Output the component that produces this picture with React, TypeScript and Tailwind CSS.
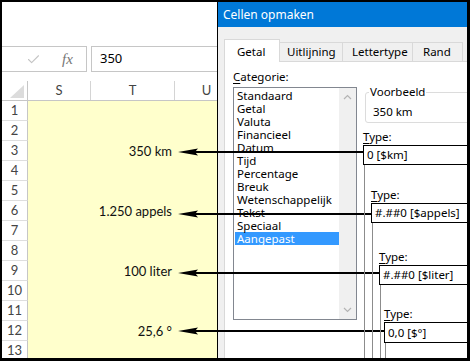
import React from "react"
import { Check } from "lucide-react"

const categories = [
    "Standaard",
    "Getal",
    "Valuta",
    "Financieel",
    "Datum",
    "Tijd",
    "Percentage",
    "Breuk",
    "Wetenschappelijk",
    "Tekst",
    "Speciaal",
    "Aangepast",
]

const cellTexts: Record<number, string> = {
    3: "350 km",
    6: "1.250 appels",
    9: "100 liter",
    12: "25,6 °",
}

const rows = Array.from({ length: 13 }, (_, i) => i + 1)

// arrow rows (y) and where each line meets its Type box (x), in overlay coords
const arrows = [
    { y: 150, x: 361 },
    { y: 212, x: 369 },
    { y: 271, x: 377 },
    { y: 329, x: 382 },
]

const ExcelPane: React.FC = () => {
    return (
        <div className="w-[215px] shrink-0 flex flex-col overflow-hidden bg-white font-['Lato',sans-serif]">
            <div className="h-[44px] shrink-0" />

            <div className="h-[26px] shrink-0 flex">
                <div className="w-[85px] shrink-0 flex items-center border-y border-r border-[#c6c6c6]">
                    <Check size={15} strokeWidth={1.7} className="ml-[24px] text-[#c4c4c4]" />
                    <span className="ml-[21px] font-['Liberation_Serif',serif] italic text-[15px] text-[#767676]">fx</span>
                </div>
                <div className="ml-[4px] w-[200px] shrink-0 flex items-center pl-[8px] border-y border-l border-[#c6c6c6] font-['Noto_Sans',sans-serif] text-[13px] text-black">
                    350
                </div>
            </div>

            <div className="h-[9px] shrink-0" />

            <div className="h-[20px] shrink-0 flex border-b border-[#c6c6c6] text-[13px] text-[#444]">
                <div className="w-[26px] shrink-0 border-r border-[#c6c6c6]">
                    <svg width="25" height="19" viewBox="0 0 25 19">
                        <polygon points="22,4 22,17 8,17" fill="#dcdcdc" />
                    </svg>
                </div>
                <div className="w-[63px] shrink-0 flex items-center justify-center border-r border-[#d4d4d4]">S</div>
                <div className="w-[84px] shrink-0 flex items-center justify-center border-r border-[#d4d4d4]">T</div>
                <div className="w-[63px] shrink-0 flex items-center justify-center">U</div>
            </div>

            {rows.map((r) => (
                <div key={r} className="h-[20px] shrink-0 flex">
                    <div className="w-[26px] shrink-0 flex items-center justify-center border-r border-b border-r-[#c6c6c6] border-b-[#dedede] text-[13px] text-[#444]">
                        {r}
                    </div>
                    <div className="flex-1 bg-[#ffffcc]">
                        <div className="w-[147px] pr-[3px] text-right text-[13px] leading-[20px] text-[#111]">{cellTexts[r] ?? ""}</div>
                    </div>
                </div>
            ))}
        </div>
    )
}

const Chevron: React.FC<{ up?: boolean }> = ({ up }) => (
    <svg width="9" height="6" viewBox="0 0 9 6">
        <polyline
            points={up ? "1,5 4.5,1.5 8,5" : "1,1 4.5,4.5 8,1"}
            fill="none"
            stroke="#b4b4b4"
            strokeWidth="1.2"
        />
    </svg>
)

const FormatDialog: React.FC = () => {
    return (
        <div className="flex-1 flex flex-col overflow-hidden border-l border-black font-['Noto_Sans',sans-serif] text-[11.5px] text-black">
            <div className="h-[25px] shrink-0 flex items-center pl-[5px] bg-[#0078d7] text-white text-[12px]">Cellen opmaken</div>

            <div className="flex-1 flex flex-col bg-[#f0f0f0] pl-[6px] pt-[12px]">
                <div className="h-[22px] shrink-0 flex items-end leading-[16px]">
                    <div className="relative z-10 w-[56px] h-[23px] -mb-[1px] shrink-0 bg-white border-x border-t border-[#d9d9d9] pl-[12px] pt-[4px]">
                        Getal
                    </div>
                    <div className="w-[63px] h-[19px] shrink-0 border-t border-r border-[#d9d9d9] pl-[7px] pt-[1px]">Uitlijning</div>
                    <div className="w-[70px] h-[19px] shrink-0 border-t border-r border-[#d9d9d9] pl-[9px] pt-[1px]">Lettertype</div>
                    <div className="w-[50px] h-[19px] shrink-0 border-t border-r border-[#d9d9d9] pl-[10px] pt-[1px]">Rand</div>
                </div>

                <div className="flex-1 flex overflow-hidden bg-white border-t border-l border-[#d9d9d9] pl-[8px] pt-[7px]">
                    <div className="w-[124px] shrink-0 flex flex-col">
                        <div className="h-[18px] leading-[16px]">
                            <span className="underline underline-offset-2">C</span>ategorie:
                        </div>
                        <div className="h-[233px] flex border border-[#828790]">
                            <div className="flex-1 pl-[1px] pt-[1px]">
                                {categories.map((c) => (
                                    <div
                                        key={c}
                                        className={
                                            c === "Aangepast"
                                                ? "h-[13px] leading-[13px] pl-[2px] bg-[#3399ff] text-white"
                                                : "h-[13px] leading-[13px] pl-[2px]"
                                        }
                                    >
                                        {c}
                                    </div>
                                ))}
                            </div>
                            <div className="w-[17px] flex flex-col items-center justify-between bg-[#f0f0f0] py-[6px]">
                                <Chevron up />
                                <Chevron />
                            </div>
                        </div>
                    </div>

                    <div className="ml-[8px] pt-[23px]">
                        <div className="relative w-[120px] h-[31px] rounded-[3px] border border-[#dcdcdc] pl-[7px] pt-[11px] leading-[16px]">
                            <span className="absolute left-[3px] -top-[9px] bg-white px-[1px] leading-[16px]">Voorbeeld</span>
                            350 km
                        </div>
                    </div>
                </div>
            </div>
        </div>
    )
}

const TypeCallout: React.FC<{ pos: string; value: string; boxH: string }> = ({ pos, value, boxH }) => (
    <div className={`absolute ${pos} w-[130px] font-['Noto_Sans',sans-serif] text-[11.5px] text-black`}>
        <div className="h-[15px] leading-[14px]">
            <span className="underline underline-offset-2">T</span>ype:
        </div>
        <div className={`${boxH} bg-white border-[1.5px] border-black pl-[3px] flex items-center`}>{value}</div>
        <div className="ml-[1px] w-px h-[220px] bg-[#8c8c8c]" />
    </div>
)

const Annotations: React.FC = () => (
    <>
        <svg className="absolute inset-0 pointer-events-none" width="465" height="356" viewBox="0 0 465 356">
            {arrows.map((a) => (
                <g key={a.y}>
                    <rect x="192" y={a.y - 1} width={a.x - 192} height="2" fill="#000" />
                    <polygon points={`176,${a.y} 196,${a.y - 3.5} 193,${a.y} 196,${a.y + 3.5}`} fill="#000" />
                </g>
            ))}
        </svg>
        <TypeCallout pos="left-[361px] top-[128px]" value="0 [$km]" boxH="h-[20px]" />
        <TypeCallout pos="left-[369px] top-[186px]" value="#.##0 [$appels]" boxH="h-[20px]" />
        <TypeCallout pos="left-[377px] top-[248px]" value="#.##0 [$liter]" boxH="h-[20px]" />
        <TypeCallout pos="left-[382px] top-[305px]" value="0,0 [$°]" boxH="h-[21px]" />
    </>
)

export default function App() {
    return (
        <div className="w-[470px] h-[361px] bg-black pt-[2px] pl-[2px] pr-[3px] pb-[3px]">
            <div className="relative w-full h-full overflow-hidden bg-white">
                <div className="flex w-full h-full">
                    <ExcelPane />
                    <FormatDialog />
                </div>
                <Annotations />
            </div>
        </div>
    )
}
